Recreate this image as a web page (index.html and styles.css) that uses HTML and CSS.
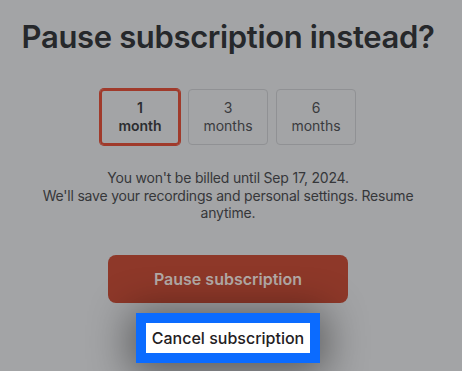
FILE: index.html
```html
<!DOCTYPE html>
<html lang="en">
<head>
<meta charset="utf-8">
<title>Pause subscription</title>
<link rel="stylesheet" href="styles.css">
</head>
<body>
<main class="page">
  <h1 class="title">Pause subscription instead?</h1>
  <div class="options">
    <button class="option selected"><span>1</span><span>month</span></button>
    <button class="option"><span>3</span><span>months</span></button>
    <button class="option"><span>6</span><span>months</span></button>
  </div>
  <p class="info">You won't be billed until Sep 17, 2024.<br>We'll save your recordings and personal settings. Resume anytime.</p>
  <button class="pause">Pause subscription</button>
  <a class="cancel" href="#">Cancel subscription</a>
</main>
</body>
</html>
```
FILE: styles.css
```css
html, body {
  margin: 0;
  padding: 0;
  background: #a3a4a6;
  height: 100%;
  overflow: hidden;
}
body {
  font-family: Inter, "Liberation Sans", sans-serif;
}
.page {
  width: 456px;
  display: flex;
  flex-direction: column;
  align-items: center;
}
.title {
  margin: 17px 0 0;
  font-size: 31px;
  line-height: 40px;
  font-weight: 600;
  color: #26282b;
  letter-spacing: -0.35px;
}
.options {
  display: flex;
  gap: 8px;
  margin-top: 32px;
}
.option {
  width: 80px;
  height: 56px;
  box-sizing: border-box;
  border: 1px solid #909194;
  border-radius: 4px;
  background: transparent;
  display: flex;
  flex-direction: column;
  align-items: center;
  justify-content: center;
  font-family: inherit;
  font-size: 14px;
  line-height: 18px;
  color: #3a3b3e;
  padding: 0;
}
.option.selected {
  border: 2px solid #a03a2b;
  box-shadow: 0 0 0 1px #a03a2b;
  font-weight: 600;
  color: #2c2d30;
}
.info {
  margin: 24px 0 0;
  max-width: 400px;
  text-align: center;
  font-size: 14px;
  line-height: 17.5px;
  letter-spacing: -0.2px;
  color: #36373a;
}
.pause {
  margin-top: 33px;
  width: 240px;
  height: 48px;
  border: 0;
  border-radius: 8px;
  background: #8e3829;
  color: #b3aaa6;
  font-family: inherit;
  font-size: 16px;
  font-weight: 600;
}
.cancel {
  position: relative;
  z-index: 2;
  margin-top: 20px;
  height: 30px;
  padding: 0 6px;
  box-sizing: border-box;
  display: flex;
  align-items: center;
  background: #ffffff;
  color: #1f2023;
  font-size: 16px;
  font-weight: 500;
  text-decoration: none;
  box-shadow: 0 0 0 10px #0b6bff, 0 4px 40px 16px rgba(0, 0, 0, 0.45);
}
```
